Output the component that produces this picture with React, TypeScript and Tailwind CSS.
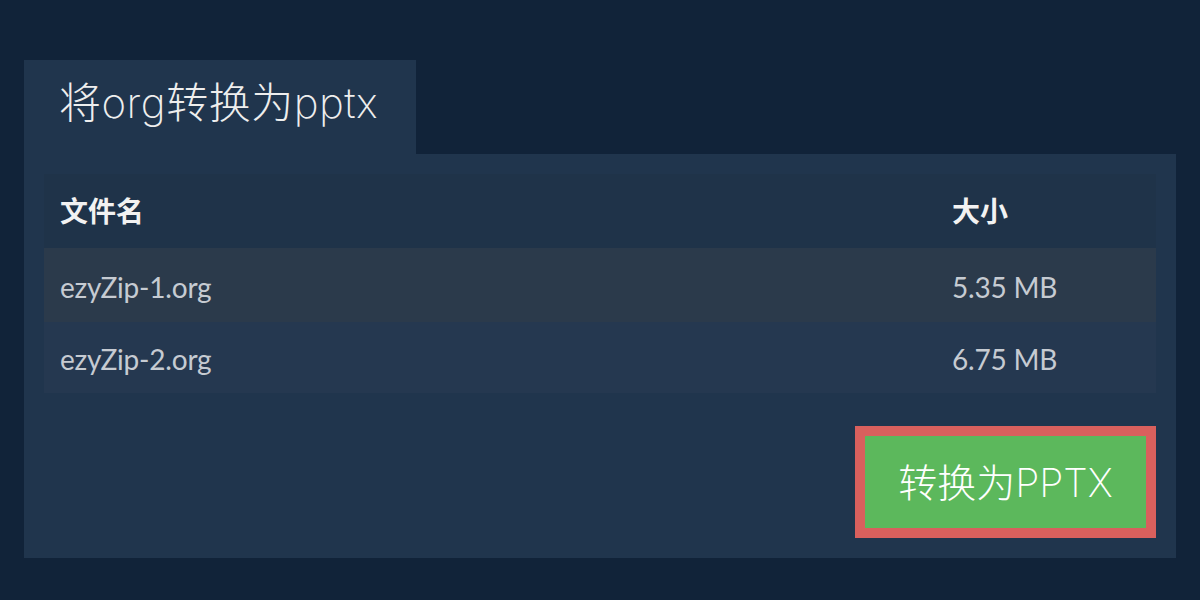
import React from "react";

const font = { fontFamily: 'Lato, "Noto Sans CJK SC", sans-serif' };
const headFont = { fontFamily: 'Inter, "Noto Sans CJK SC", sans-serif' };

export default function App() {
  const rows = [
    { name: "ezyZip-1.org", size: "5.35 MB", bg: "bg-[#2b3a4b]", h: "h-[74px]" },
    { name: "ezyZip-2.org", size: "6.75 MB", bg: "bg-[#253850]", h: "h-[71px]" },
  ];
  return (
    <div className="w-[1200px] h-[600px] bg-[#112339] pt-[60px] px-6" style={font}>
      <div className="flex">
        <div
          className="w-[392px] h-[94px] bg-[#20354d] pl-[35px] pb-[8px] flex items-center text-[42px] font-extralight text-[#eeeeee] leading-none tracking-[0.5px]"
          style={headFont}
        >
          将org转换为pptx
        </div>
      </div>
      <div className="bg-[#20354d] h-[404px] px-5 pt-5 flex flex-col">
        <div className="flex flex-col">
          <div className="grid grid-cols-[1fr_204px] h-[74px] items-center bg-[#1f3349] text-[28px] font-bold text-[#f2f2f2] leading-none">
            <div className="pl-4">文件名</div>
            <div>大小</div>
          </div>
          {rows.map((r) => (
            <div
              key={r.name}
              className={`grid grid-cols-[1fr_204px] ${r.h} items-center ${r.bg} text-[28px] text-[#c6cbd2] leading-none tracking-[-0.2px]`}
            >
              <div className="pl-4 pt-[3px]">{r.name}</div>
              <div className="pt-[3px]">{r.size}</div>
            </div>
          ))}
        </div>
        <div className="flex justify-end mt-[33px]">
          <div
            className="w-[301px] h-[112px] border-[10px] border-[#d9605d] bg-[#5cb85c] flex items-center justify-center text-[39px] font-extralight text-white leading-none"
            style={headFont}
          >
            转换为PPTX
          </div>
        </div>
      </div>
    </div>
  );
}
